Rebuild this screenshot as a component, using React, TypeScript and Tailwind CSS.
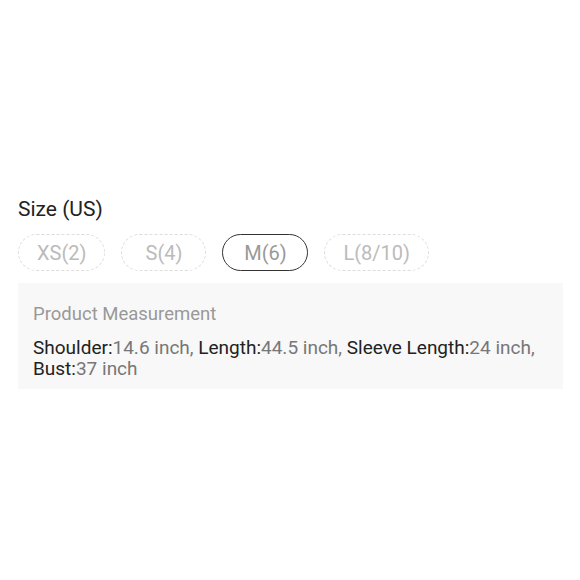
export default function App() {
  const sizes = [
    { label: "XS(2)", selected: false },
    { label: "S(4)", selected: false },
    { label: "M(6)", selected: true },
    { label: "L(8/10)", selected: false },
  ];
  return (
    <div className="w-[580px] h-[580px] bg-white" style={{ fontFamily: "Roboto, 'Liberation Sans', sans-serif" }}>
      <div className="pt-[195px] pl-[18px] pr-[17px]">
        <div className="text-[21px] leading-[28px] text-[#222]">Size (US)</div>
        <div className="flex gap-[16px] mt-[11px]">
          {sizes.map((s) =>
            s.selected ? (
              <div key={s.label} className="h-[37px] min-w-[86px] px-[18px] flex items-center justify-center rounded-full border-[1.5px] border-[#333] text-[20px] text-[#999]">
                {s.label}
              </div>
            ) : (
              <div key={s.label} className="h-[37px] min-w-[85px] px-[18px] flex items-center justify-center rounded-full border border-dashed border-[#ddd] text-[20px] text-[#bbb]">
                {s.label}
              </div>
            )
          )}
        </div>
        <div className="mt-[12px] bg-[#f8f8f8] px-[15px] pt-[19px] pb-[10px]">
          <div className="text-[18.5px] leading-[24px] text-[#999]">Product Measurement</div>
          <div className="mt-[11px] text-[19px] leading-[21px] text-[#777]">
            <span className="text-[#222]">Shoulder:</span>14.6 inch, <span className="text-[#222]">Length:</span>44.5 inch,{" "}
            <span className="text-[#222]">Sleeve Length:</span>24 inch, <span className="text-[#222]">Bust:</span>37 inch
          </div>
        </div>
      </div>
    </div>
  );
}
